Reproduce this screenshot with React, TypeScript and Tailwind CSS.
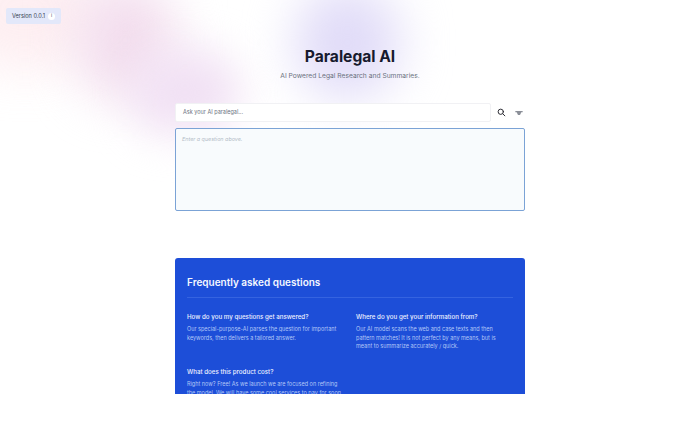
const FAQS = [
  {
    q: 'How do you my questions get answered?',
    a: 'Our special-purpose-AI parses the question for important keywords, then delivers a tailored answer.',
  },
  {
    q: 'Where do you get your information from?',
    a: 'Our AI model scans the web and case texts and then pattern matches! It is not perfect by any means, but is meant to summarize accurately / quick.',
  },
  {
    q: 'What does this product cost?',
    a: 'Right now? Free! As we launch we are focused on refining the model. We will have some cool services to pay for soon.',
  },
];

function Backdrop() {
  return (
    <div className="pointer-events-none absolute inset-0 overflow-hidden">
      <div className="absolute left-[-50px] top-[-50px] h-[120px] w-[150px] rounded-full bg-[#fde8ec] opacity-70 blur-[24px]" />
      <div className="absolute left-[75px] top-[-20px] h-[120px] w-[100px] rounded-full bg-[#f3deee] blur-[24px]" />
      <div className="absolute left-[130px] top-[50px] h-[85px] w-[110px] rounded-full bg-[#f1e1f4] blur-[20px]" />
      <div className="absolute left-[295px] top-[-15px] h-[115px] w-[105px] rounded-full bg-[#e1dcf8] blur-[24px]" />
    </div>
  );
}

export default function App() {
  return (
    <div className="relative h-[438px] w-[700px] overflow-hidden bg-white font-['Inter',sans-serif]">
      <Backdrop />

      <div className="absolute left-[6px] top-[8px] flex h-[16px] w-[55px] items-center gap-[3px] rounded-[2px] bg-[#e3e8fa] pl-[6px] text-[5.6px] text-[#374151]">
        <span>Version 0.0.1</span>
        <span className="flex h-[7px] w-[7px] items-center justify-center rounded-full bg-white text-[5px] text-[#4b5563]">
          i
        </span>
      </div>

      <div className="relative h-[394px] overflow-hidden">
        <main className="mx-auto flex w-[350px] flex-col">
          <h1 className="mt-[46px] text-center text-[15.6px] font-bold leading-[22px] text-[#171a2e]">Paralegal AI</h1>
          <p className="mt-[3px] text-center text-[6.7px] leading-[10px] text-[#6b7280]">
            AI Powered Legal Research and Summaries.
          </p>

          <div className="mt-[22px] flex items-center">
            <div className="flex h-[19px] w-[316px] items-center rounded-[2px] border border-[#f1f1f4] bg-white pl-[7px] text-[5.5px] text-[#6b7280]">
              Ask your AI paralegal...
            </div>
            <svg
              viewBox="0 0 24 24"
              className="ml-[6px] h-[9px] w-[9px]"
              fill="none"
              stroke="#27272f"
              strokeWidth="2.6"
              strokeLinecap="round"
            >
              <circle cx="10" cy="10" r="7" />
              <path d="M15.5 15.5 21 21" />
            </svg>
            <svg viewBox="0 0 24 24" className="ml-[9px] h-[8px] w-[8px]" fill="#8b8f98">
              <path d="M1 6h22v4H1zM5 10h14l-4 8h-6z" />
            </svg>
          </div>

          <div className="mt-[6px] h-[83px] rounded-[2px] border border-[#7ba3d6] bg-[#f8fbfd] px-[6px] py-[6px] text-[5.4px] italic leading-[8px] text-[#b4bdc8]">
            Enter a question above.
          </div>

          <section className="mt-[47px] h-[180px] rounded-t-[3px] bg-[#1d4ed8] px-[12px] pt-[16px]">
            <h2 className="text-[10px] font-semibold leading-[16px] text-[#f4f7ff]">Frequently asked questions</h2>
            <div className="mt-[7px] border-t border-[#3563e0]" />
            <div className="mt-[14px] grid grid-cols-[157px_155px] gap-x-[12px] gap-y-[16px]">
              {FAQS.map((f) => (
                <div key={f.q}>
                  <h3 className="text-[6.2px] font-medium leading-[10px] text-[#eef2ff]">{f.q}</h3>
                  <p className="mt-[3px] text-[5.5px] leading-[8.7px] text-[#b3c7f7]">{f.a}</p>
                </div>
              ))}
            </div>
          </section>
        </main>
      </div>
    </div>
  );
}
